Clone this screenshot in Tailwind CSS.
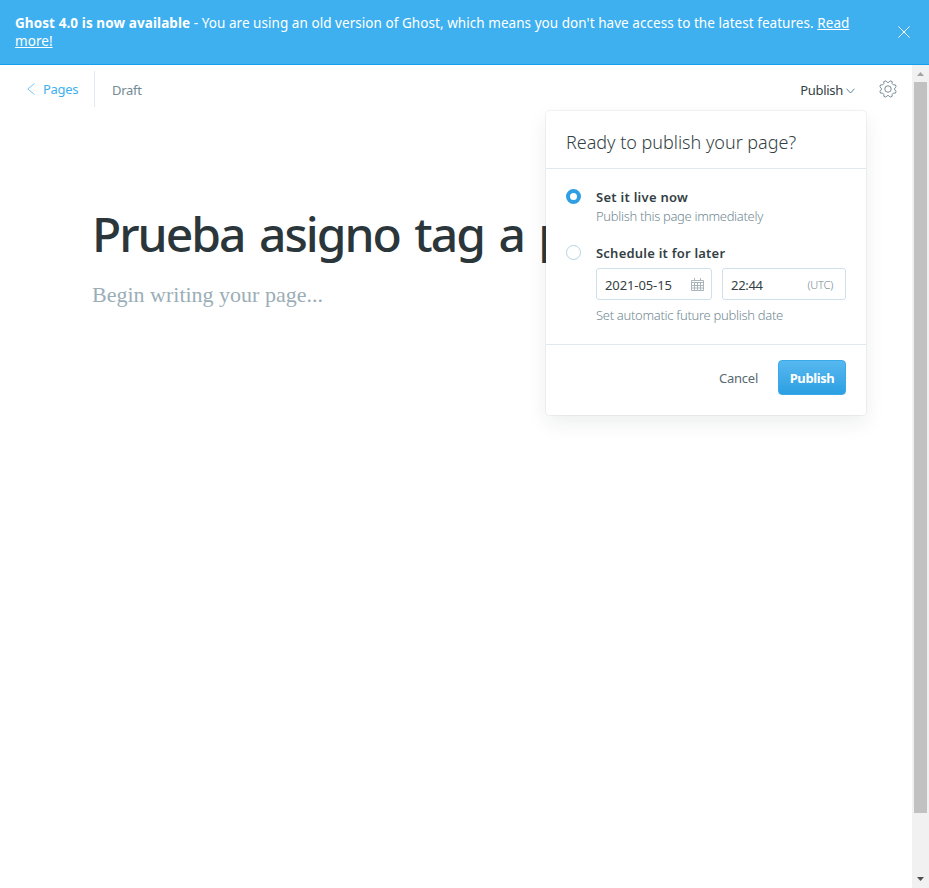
<!DOCTYPE html>
<html lang="es">
<head>
<meta charset="utf-8">
<title>Ghost editor</title>
<script src="https://cdn.jsdelivr.net/npm/@tailwindcss/browser@4"></script>
</head>
<body class="h-[888px] w-[929px] overflow-hidden bg-white font-['Noto_Sans','Open_Sans',sans-serif] text-[13px] text-[#343f44]">
<div class="flex h-full flex-col">
  <aside class="flex h-[65px] shrink-0 items-center justify-between border-b border-[#169fec] bg-[#3eb0ef] pl-[15px] pr-[19px] text-white">
    <p class="w-[850px] whitespace-nowrap text-[13.500px] leading-[18px] tracking-[0.05px]"><b class="font-bold tracking-[0.09px]">Ghost 4.0 is now available</b> - You are using an old version of Ghost, which means you don't have access to the latest features. <a class="underline" href="#">Read<br>more!</a></p>
    <svg class="size-3 shrink-0" viewBox="0 0 12 12" fill="none" stroke="currentColor"><path d="M.4.4l11.200 11.200M11.600.4L.4 11.600"/></svg>
  </aside>
  <div class="flex min-h-0 grow">
    <main class="relative grow">
      <header class="flex h-[48px] items-center tracking-[-0.3px]">
        <a class="flex h-9 w-[95px] items-center border-r border-[#dfe9ef] pl-[27px] text-[#3eb0ef]" href="#"><svg class="mr-2 h-3 w-2" viewBox="0 0 8 12" fill="none" stroke="currentColor" stroke-opacity=".7"><path d="M7.500.5L.8 6l6.700 5.500"/></svg><span class="pt-px">Pages</span></a>
        <span class="ml-[17px] pt-[3px] text-[#738a94]">Draft</span>
        <div class="ml-auto flex items-center pt-[3px]">Publish
          <svg class="ml-[3px] h-[6px] w-[9px]" viewBox="0 0 9 6" fill="none" stroke="#5b8296"><path d="M.5.7l4 4.300 4-4.300"/></svg>
        </div>
        <svg class="ml-[24px] mr-[15px] size-[18px]" viewBox="0 0 24 24" fill="none" stroke="#738a94" stroke-width="1.300" stroke-linejoin="round"><circle cx="12" cy="12" r="4.300"/><path d="M20.920 13.170L22.890 15.020 21.840 17.560 19.140 17.480 17.480 19.140 17.560 21.840 15.020 22.890 13.170 20.920 10.830 20.920 8.980 22.890 6.440 21.840 6.520 19.140 4.860 17.480 2.160 17.560 1.110 15.020 3.080 13.170 3.080 10.830 1.110 8.980 2.160 6.440 4.860 6.520 6.520 4.860 6.440 2.160 8.980 1.110 10.830 3.080 13.170 3.080 15.020 1.110 17.560 2.160 17.480 4.860 19.140 6.520 21.840 6.440 22.890 8.980 20.920 10.830z"/></svg>
      </header>
      <section class="pl-[92px] pt-[90px]">
        <h1 class="whitespace-nowrap text-[48px] font-medium leading-[62px] tracking-[-2px] [word-spacing:4px] text-[#2b363b]">Prueba asigno tag a p</h1>
        <p class="mt-[17px] font-['Liberation_Serif',serif] text-[22px] leading-[26px] text-[#9baeb8]">Begin writing your page...</p>
      </section>
      <form class="absolute left-[546px] top-[46px] h-[304px] w-[320px] rounded-[4px] bg-white shadow-[0_0_0_1px_rgba(99,114,130,0.08),0_8px_20px_rgba(27,39,51,0.08)]">
        <h2 class="h-[58px] border-b border-[#dfe9ef] pl-5 text-[18px] font-light leading-[62px] tracking-[-0.02px]">Ready to publish your page?</h2>
        <div class="flex h-[176px] flex-col border-b border-[#dfe9ef] px-5 pt-[19px]">
          <div class="flex h-[56px] gap-[15px]">
            <i class="mt-px size-[15px] rounded-full border-4 border-[#2f9fe3] bg-white"></i>
            <div class="leading-[19px]"><div class="font-semibold tracking-[0.27px]">Set it live now</div><div class="font-light tracking-[-0.32px] text-[#738a94]">Publish this page immediately</div></div>
          </div>
          <div class="flex gap-[15px]">
            <i class="mt-px size-[15px] rounded-full border border-[#b5d3e5] bg-white"></i>
            <div class="grow leading-[19px]">
              <div class="font-semibold tracking-[0.22px]">Schedule it for later</div>
              <div class="mt-[5px] flex gap-[10px]">
                <div class="flex h-8 w-[116px] items-center justify-between rounded-[3px] border border-[#cfe0ea] pl-2 pr-[7px]"><span class="pt-[3px] tracking-[-0.1px]">2021-05-15</span>
                  <svg class="size-[13px]" viewBox="0 0 13 13" fill="none" stroke="#a9b5bb"><path d="M.5 2.500h12v10H.5zM.5 4.500h12M.5 7.500h12M.5 10h12M3.500 4.500v8M6.500 4.500v8M9.500 4.500v8M3.500 0v3M9.500 0v3"/></svg></div>
                <div class="flex h-8 w-[124px] items-center justify-between rounded-[3px] border border-[#cfe0ea] pl-2 pr-3"><span class="pt-[3px] tracking-[-0.3px]">22:44</span><span class="text-[11px] font-light tracking-[-0.2px] text-[#738a94]">(UTC)</span></div>
              </div>
              <div class="mt-[6px] font-light tracking-[-0.3px] text-[#738a94]">Set automatic future publish date</div>
            </div>
          </div>
        </div>
        <footer class="flex items-center justify-end gap-5 pr-5 pt-[15px]"><span class="pt-[2px] tracking-[-0.25px] text-[#586a72]">Cancel</span><button type="button" class="h-[35px] w-[68px] rounded-[4px] border border-[#3aa9ea] bg-linear-to-b from-[#56b8ef] to-[#2a9fe2] pt-[3px] font-bold tracking-[-0.4px] text-white">Publish</button></footer>
      </form>
    </main>
    <div class="flex w-[17px] shrink-0 flex-col items-center bg-[#f1f1f1]">
      <svg class="h-[17px] w-[17px]" viewBox="0 0 17 17" fill="#a3a3a3"><path d="M5 11l3.500-4 3.500 4z"/></svg>
      <div class="h-[731px] w-[13px] bg-[#c1c1c1]"></div>
      <svg class="mt-auto h-[17px] w-[17px]" viewBox="0 0 17 17" fill="#505050"><path d="M5 6l3.500 4L12 6z"/></svg>
    </div>
  </div>
</div>
</body>
</html>
